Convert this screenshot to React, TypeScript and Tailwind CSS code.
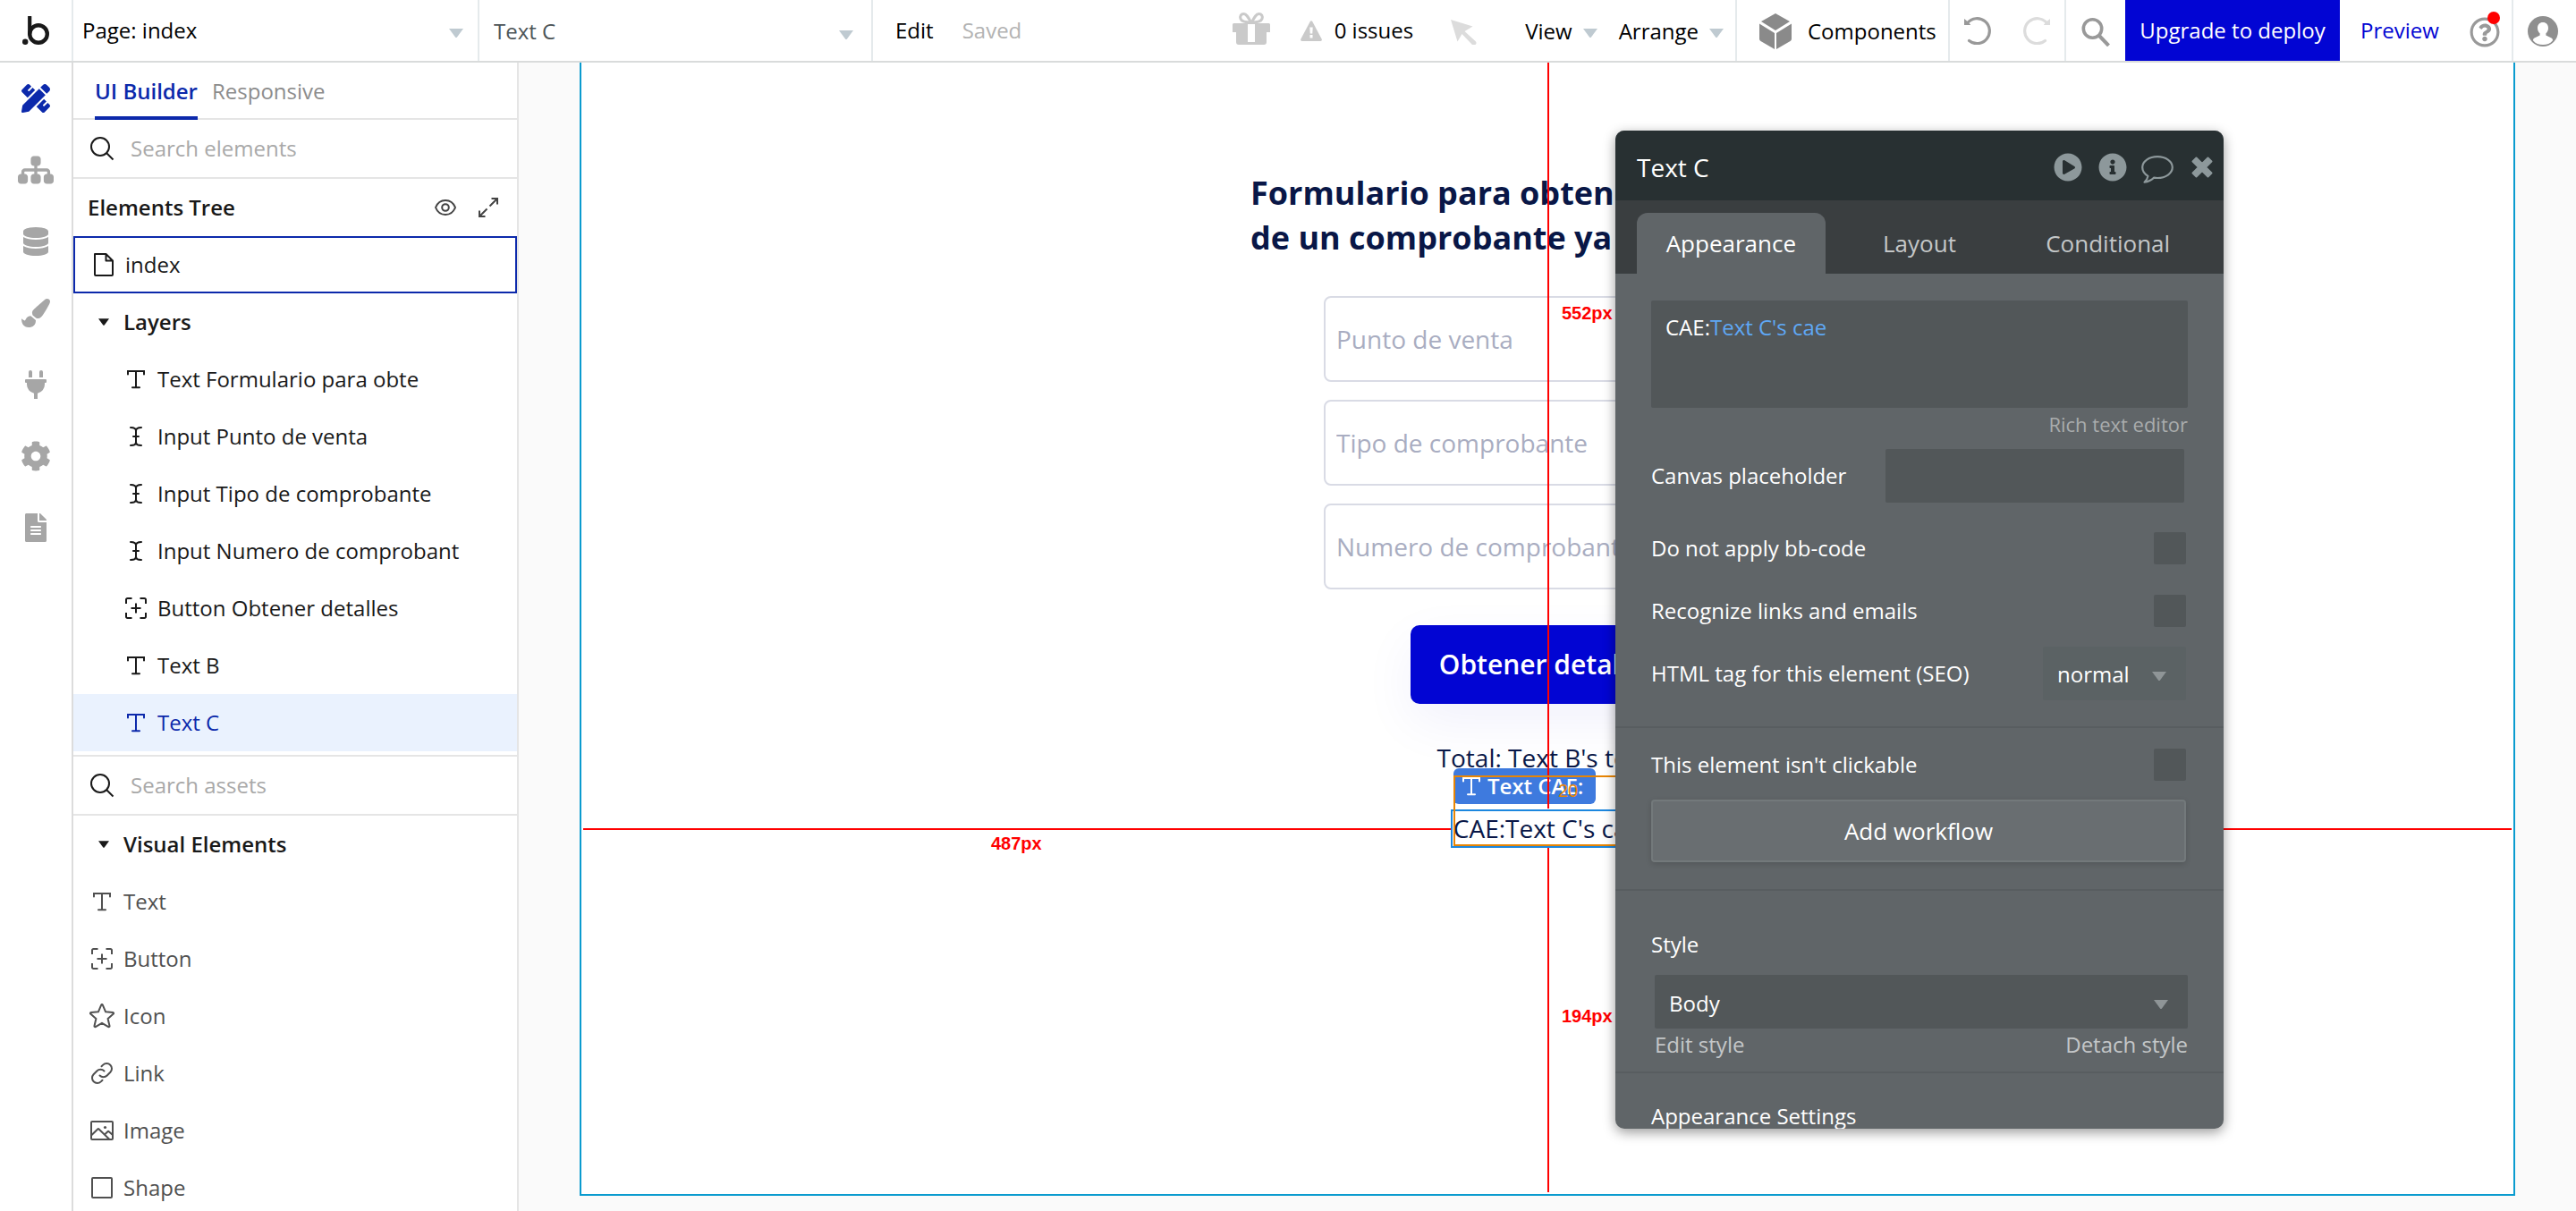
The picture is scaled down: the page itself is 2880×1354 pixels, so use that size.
import type { ReactNode } from "react";
import {
  FaCog,
  FaDatabase,
  FaFileAlt,
  FaInfoCircle,
  FaPaintBrush,
  FaPencilRuler,
  FaPlayCircle,
  FaPlug,
  FaRegQuestionCircle,
} from "react-icons/fa";
import { FaSitemap } from "react-icons/fa6";

type IconProps = { className?: string };

const Caret = ({ className = "" }: IconProps) => (
  <svg viewBox="0 0 16 10" className={className} fill="currentColor" aria-hidden="true">
    <path d="M0 0h16L9.2 9.3a1.5 1.5 0 0 1-2.4 0z" />
  </svg>
);

const BubbleLogo = () => (
  <svg viewBox="0 0 30 32" className="h-8 w-[30px]" aria-hidden="true">
    <circle cx="3.2" cy="28.7" r="3.2" fill="#191919" />
    <circle cx="18" cy="20" r="9.8" fill="none" stroke="#191919" strokeWidth="4.4" />
    <path d="M8.2 0.8v19" stroke="#191919" strokeWidth="4.2" strokeLinecap="round" />
  </svg>
);

const GiftIcon = () => (
  <svg viewBox="0 0 42 36" className="h-9 w-[42px]" aria-hidden="true">
    <g fill="none" stroke="#cacaca" strokeWidth="3">
      <path d="M20.5 11C17.5 5 15.500 1.500 12.500 1.500S8 4 9 7s4.500 4 11.500 4z" />
      <path d="M21.500 11C24.500 5 26.500 1.500 29.500 1.500S34 4 33 7s-4.500 4-11.500 4z" />
    </g>
    <path d="M1.500 12h39a1.500 1.500 0 0 1 1.500 1.500V22h-4v11a3 3 0 0 1-3 3H7a3 3 0 0 1-3-3V22H0v-8.500A1.500 1.500 0 0 1 1.500 12z" fill="#cacaca" />
    <path d="M17 13h8v20h-8z" fill="#fff" />
  </svg>
);

const WarningIcon = () => (
  <svg viewBox="0 0 24 23" className="h-[23px] w-6" aria-hidden="true">
    <path d="M10.900.8a1.300 1.300 0 0 1 2.200 0l10.600 20a1.500 1.500 0 0 1-1.300 2.200H1.600A1.500 1.500 0 0 1 .3 20.800z" fill="#cacaca" />
    <path d="M10.300 7.500h3.400l-.4 7h-2.600zM10.500 16h3v3.500h-3z" fill="#fff" />
  </svg>
);

const CursorIcon = () => (
  <svg viewBox="0 0 29 28" className="h-7 w-[29px]" aria-hidden="true">
    <path d="M0 0l24.500 7.500-9 5.500 12.300 11.200a2.700 2.700 0 0 1-3.800 3.800L12.500 16 7.500 24.500z" fill="#dcdcdc" />
  </svg>
);

const CubeIcon = () => (
  <svg viewBox="0 0 36 40" className="h-10 w-9" fill="#8a8a8a" aria-hidden="true">
    <path d="M18 0L34 9 18 19 2 9z" />
    <path d="M0 11.500l17 10.500v18L1.500 31A3 3 0 0 1 0 28.500z" />
    <path d="M36 11.500L19 22v18l15.500-9a3 3 0 0 0 1.500-2.500z" />
  </svg>
);

const UndoIcon = ({ className = "" }: IconProps) => (
  <svg viewBox="0 0 31 32" className={`h-8 w-[31px] ${className}`} aria-hidden="true">
    <path d="M3.500 7.800A14 14 0 1 1 5.500 27.500" fill="none" stroke="currentColor" strokeWidth="3.200" strokeLinecap="round" />
    <path d="M0 3l2.500 2L7 9.500V10H0z" fill="currentColor" />
  </svg>
);

const ToolbarSearchIcon = () => (
  <svg viewBox="0 0 32 32" className="size-8" fill="none" stroke="#999" aria-hidden="true">
    <circle cx="12.500" cy="12" r="10.200" strokeWidth="3.600" />
    <path d="M20 20l10.500 11" strokeWidth="4" />
  </svg>
);

const UserIcon = () => (
  <svg viewBox="0 0 34 34" className="size-[34px]" aria-hidden="true">
    <circle cx="17" cy="17" r="17" fill="#8f8f8f" />
    <path d="M17 7c-3.700 0-6 2.700-6 6.300 0 2.700 1.100 4.700 2.600 6v2.200L7.500 24.500c-1.200.7-1.500 1.700-1.500 2.700C8.500 30.500 12.500 32 17 32s8.500-1.500 11-4.800c0-1-.3-2-1.500-2.700l-6.100-3v-2.200c1.500-1.300 2.600-3.300 2.600-6C23 9.700 20.700 7 17 7z" fill="#fff" />
  </svg>
);

const CommentIcon = () => (
  <svg viewBox="0 0 36 32" className="h-8 w-9" fill="none" stroke="currentColor" strokeWidth="2.200" strokeLinejoin="round" aria-hidden="true">
    <path d="M18 2.100c9.300 0 16.800 5.300 16.800 12S27.300 26 18 26c-1.400 0-2.700-.1-4-.3-2.600 2.600-6 4.400-10.500 5 2.200-2 3.500-4 4-6.800C3.700 21.700 1.200 18.100 1.200 14.100c0-6.700 7.500-12 16.800-12z" />
  </svg>
);

const CloseIcon = () => (
  <svg viewBox="0 0 24 24" className="size-6" fill="currentColor" stroke="currentColor" strokeWidth="2" strokeLinejoin="round" aria-hidden="true">
    <path d="M5.500 1.500L12 8l6.500-6.500 4 4L16 12l6.500 6.500-4 4L12 16l-6.500 6.500-4-4L8 12 1.500 5.500z" />
  </svg>
);

const stroked = { fill: "none", stroke: "currentColor", strokeWidth: 2 } as const;

const TextIcon = () => (
  <svg viewBox="0 0 28 28" className="size-7 shrink-0" {...stroked} strokeLinecap="round" aria-hidden="true">
    <path d="M5 8.500V5h18v3.500M14 5v18M10 23.200h8" />
  </svg>
);

const InputIcon = () => (
  <svg viewBox="0 0 28 28" className="size-7 shrink-0" {...stroked} strokeLinecap="round" aria-hidden="true">
    <path d="M8 4c3.500 0 6 .8 6 3.500v13c0 2.700-2.500 3.500-6 3.500M20 4c-3.500 0-6 .8-6 3.500v13c0 2.700 2.500 3.500 6 3.500M11 14h6" />
  </svg>
);

const ButtonIcon = () => (
  <svg viewBox="0 0 28 28" className="size-7 shrink-0" {...stroked} aria-hidden="true">
    <path d="M3 9V4.500A1.500 1.500 0 0 1 4.500 3H9.500M18.500 3h5A1.500 1.500 0 0 1 25 4.500V9M25 19v4.500a1.500 1.500 0 0 1-1.500 1.500h-5M9.500 25h-5A1.500 1.500 0 0 1 3 23.500V19M14 8.500v11M8.500 14h11" />
  </svg>
);

const StarIcon = () => (
  <svg viewBox="0 0 28 28" className="size-7 shrink-0" {...stroked} strokeLinejoin="round" aria-hidden="true">
    <path d="M13.200 1.600a.9.900 0 0 1 1.600 0l3.300 7.700 8.200.7a.9.900 0 0 1 .5 1.500l-6.200 5.500 1.900 8.100a.9.900 0 0 1-1.300 1L14 21.800l-7.200 4.300a.9.900 0 0 1-1.300-1l1.900-8.100-6.200-5.500a.9.900 0 0 1 .5-1.500l8.200-.7z" />
  </svg>
);

const LinkIcon = () => (
  <svg viewBox="0 0 28 28" className="size-7 shrink-0" {...stroked} strokeLinecap="round" aria-hidden="true">
    <path d="M11.500 16.500a5.800 5.800 0 0 0 8.200 0l3.700-3.700a5.800 5.800 0 0 0-8.200-8.200l-1.700 1.700" />
    <path d="M16.500 11.500a5.800 5.800 0 0 0-8.200 0l-3.700 3.700a5.800 5.800 0 0 0 8.200 8.200l1.700-1.700" />
  </svg>
);

const ImageIcon = () => (
  <svg viewBox="0 0 28 28" className="size-7 shrink-0" {...stroked} aria-hidden="true">
    <rect x="2" y="4" width="24" height="20" rx="1" />
    <path d="M2 19.500l7.200-7a1 1 0 0 1 1.400 0L22.500 24M17 18.500l3.400-3.300a1 1 0 0 1 1.400 0L26 19" />
    <circle cx="17.500" cy="10.500" r="1.600" fill="currentColor" stroke="none" />
  </svg>
);

const ShapeIcon = () => (
  <svg viewBox="0 0 28 28" className="size-7 shrink-0" {...stroked} aria-hidden="true">
    <rect x="3" y="3" width="22" height="22" rx="1" />
  </svg>
);

const FileIcon = () => (
  <svg viewBox="0 0 28 28" className="size-7 shrink-0" {...stroked} strokeLinejoin="round" aria-hidden="true">
    <path d="M4 2h12.500L24 9.500V25a1 1 0 0 1-1 1H5a1 1 0 0 1-1-1zM16.500 2v7.500H24" />
  </svg>
);

const SearchIcon = () => (
  <svg viewBox="0 0 28 28" className="size-7 shrink-0 text-[#191919]" {...stroked} aria-hidden="true">
    <circle cx="12" cy="12" r="10" />
    <path d="M19 19l7.500 7.500" />
  </svg>
);

const EyeIcon = () => (
  <svg viewBox="0 0 24 24" className="size-6" {...stroked} aria-hidden="true">
    <path d="M1 12c2-5 6-8 11-8s9 3 11 8c-2 5-6 8-11 8s-9-3-11-8z" />
    <circle cx="12" cy="12" r="3.800" />
  </svg>
);

const ExpandIcon = () => (
  <svg viewBox="0 0 24 24" className="size-6" {...stroked} aria-hidden="true">
    <path d="M15.500 2H22v6.500M22 2l-8.500 8.500M8.500 22H2v-6.500M2 22l8.500-8.500" />
  </svg>
);

const railItems = [
  { label: "Design", icon: <FaPencilRuler className="size-8" />, color: "text-[#0c29ab]" },
  { label: "Workflow", icon: <FaSitemap className="size-10" />, color: "text-[#a6a6a6]" },
  { label: "Data", icon: <FaDatabase className="size-8" />, color: "text-[#a6a6a6]" },
  { label: "Styles", icon: <FaPaintBrush className="size-8" />, color: "text-[#a6a6a6]" },
  { label: "Plugins", icon: <FaPlug className="size-8" />, color: "text-[#a6a6a6]" },
  { label: "Settings", icon: <FaCog className="size-[34px]" />, color: "text-[#a6a6a6]" },
  { label: "Logs", icon: <FaFileAlt className="size-8" />, color: "text-[#a6a6a6]" },
];

const layers = [
  { icon: <TextIcon />, label: "Text Formulario para obte" },
  { icon: <InputIcon />, label: "Input Punto de venta" },
  { icon: <InputIcon />, label: "Input Tipo de comprobante" },
  { icon: <InputIcon />, label: "Input Numero de comprobant" },
  { icon: <ButtonIcon />, label: "Button Obtener detalles" },
  { icon: <TextIcon />, label: "Text B" },
  { icon: <TextIcon />, label: "Text C", selected: true },
];

const assets = [
  { icon: <TextIcon />, label: "Text" },
  { icon: <ButtonIcon />, label: "Button" },
  { icon: <StarIcon />, label: "Icon" },
  { icon: <LinkIcon />, label: "Link" },
  { icon: <ImageIcon />, label: "Image" },
  { icon: <ShapeIcon />, label: "Shape" },
];

type HeaderSelectProps = { label: string; value: string; className: string; caretClassName: string };

function HeaderSelect({ label, value, className, caretClassName }: HeaderSelectProps) {
  return (
    <div className={`relative border-r-2 border-[#e5eaec] ${className}`}>
      <select aria-label={label} className="h-full w-full appearance-none bg-transparent pr-10 outline-none">
        <option>{value}</option>
      </select>
      <Caret className={`pointer-events-none absolute h-2.5 w-4 text-[#bfcad1] ${caretClassName}`} />
    </div>
  );
}

function TopBar() {
  return (
    <header className="flex h-[70px] shrink-0 border-b-2 border-[#d9dbdb] bg-white text-black">
      <a href="#home" aria-label="Bubble home" className="flex w-[82px] items-center justify-center border-r-2 border-[#e5eaec]">
        <BubbleLogo />
      </a>
      <HeaderSelect label="Page" value="Page: index" className="w-[454px] pl-2.5" caretClassName="top-8 right-4" />
      <HeaderSelect label="Element" value="Text C" className="w-[440px] pt-0.5 pl-4 text-[#4d5558]" caretClassName="top-[34px] right-5" />
      <button className="pl-[25px]">Edit</button>
      <span className="flex items-center pl-8 text-[#b3b3b3]">Saved</span>

      <div className="ml-auto flex items-center border-r-2 border-[#e5eaec] pr-[13px]">
        <button aria-label="Gifts" className="pb-1"><GiftIcon /></button>
        <button className="ml-[34px] flex items-center gap-3.5"><WarningIcon />0 issues</button>
        <button aria-label="Inspect" className="ml-[42px] pt-1"><CursorIcon /></button>
        <button className="ml-[54px] flex items-center gap-3 pt-0.5">View<Caret className="mt-1 h-2.5 w-4 text-[#bfcad1]" /></button>
        <button className="ml-6 flex items-center gap-3 pt-0.5">Arrange<Caret className="mt-1 h-2.5 w-4 text-[#bfcad1]" /></button>
      </div>
      <button className="flex w-[238px] items-center gap-[18px] border-r-2 border-[#e5eaec] pt-0.5 pl-[25px]">
        <CubeIcon />Components
      </button>
      <div className="flex w-[130px] items-center justify-between border-r-2 border-[#e5eaec] px-4">
        <button aria-label="Undo" className="text-[#999]"><UndoIcon /></button>
        <button aria-label="Redo" className="text-[#dcdcdc]"><UndoIcon className="-scale-x-100" /></button>
      </div>
      <button aria-label="Search" className="flex w-[66px] items-center justify-center pt-1"><ToolbarSearchIcon /></button>
      <button className="w-60 bg-[#0205d3] text-white">Upgrade to deploy</button>
      <div className="flex w-[194px] items-center justify-between border-r-2 border-[#e5eaec] pr-[13px] pl-[23px]">
        <a href="#preview" className="text-[#0205d3]">Preview</a>
        <button aria-label="Help" className="relative pt-1 text-[#999]">
          <FaRegQuestionCircle className="size-[34px]" />
          <span className="absolute -top-0.5 right-0 size-3.5 rounded-full bg-[#ff0000]" />
        </button>
      </div>
      <button aria-label="Account" className="flex w-[70px] items-center justify-center pr-1 pt-0.5"><UserIcon /></button>
    </header>
  );
}

function Rail() {
  return (
    <nav className="flex w-[82px] shrink-0 flex-col items-center gap-12 border-r-2 border-[#dcdcdc] bg-white pt-6">
      {railItems.map((item) => (
        <button key={item.label} aria-label={item.label} className={`flex h-8 items-center justify-center ${item.color}`}>
          {item.icon}
        </button>
      ))}
    </nav>
  );
}

function SearchRow({ label }: { label: string }) {
  return (
    <label className="flex h-[66px] shrink-0 items-center gap-[18px] border-b-2 border-[#e5e5e5] pl-[18px]">
      <SearchIcon />
      <input aria-label={label} placeholder={label} className="min-w-0 flex-1 outline-none placeholder:text-[#a9a9a9]" />
    </label>
  );
}

function GroupTitle({ children }: { children: ReactNode }) {
  return (
    <button className="flex h-16 shrink-0 items-center gap-4 pl-7 font-semibold text-[#191919]">
      <Caret className="h-2 w-3" />
      {children}
    </button>
  );
}

function Sidebar() {
  return (
    <aside className="flex w-[498px] shrink-0 flex-col overflow-hidden border-r-2 border-[#e5e5e5] bg-white text-[#191919]">
      <div role="tablist" className="flex h-16 shrink-0 gap-4 border-b-2 border-[#e5e5e5] pl-6">
        <button role="tab" aria-selected="true" className="-mb-0.5 border-b-4 border-[#0c29ab] pt-1 font-semibold text-[#0c29ab]">
          UI Builder
        </button>
        <button role="tab" aria-selected="false" className="pt-0.5 text-[#8c8c8c]">Responsive</button>
      </div>
      <SearchRow label="Search elements" />
      <div className="flex h-16 shrink-0 items-center gap-6 pr-5 pl-4">
        <h2 className="flex-1 font-semibold">Elements Tree</h2>
        <button aria-label="Toggle visibility" className="text-[#444]"><EyeIcon /></button>
        <button aria-label="Expand tree" className="text-[#444]"><ExpandIcon /></button>
      </div>
      <button className="flex h-16 shrink-0 items-center gap-2.5 border-2 border-[#0c29ab] pl-[18px]">
        <FileIcon />index
      </button>
      <GroupTitle>Layers</GroupTitle>
      {layers.map((row) => (
        <button
          key={row.label}
          className={`flex h-16 shrink-0 items-center gap-2.5 pl-14 ${row.selected ? "bg-[#eaf2fe] text-[#0c29ab]" : ""}`}
        >
          {row.icon}
          {row.label}
        </button>
      ))}
      <div className="mt-1 shrink-0 border-t-2 border-[#e5e5e5]" />
      <SearchRow label="Search assets" />
      <GroupTitle>Visual Elements</GroupTitle>
      {assets.map((row) => (
        <button key={row.label} className="flex h-16 shrink-0 items-center gap-2.5 pl-[18px] text-[#505050]">
          {row.icon}
          {row.label}
        </button>
      ))}
    </aside>
  );
}

function Guides() {
  const label = "absolute font-['Liberation_Sans',sans-serif] text-[20px] leading-6 font-bold text-[#ff0000]";
  return (
    <div className="pointer-events-none absolute inset-0">
      <div className="absolute top-0 left-1/2 h-[834px] w-0.5 bg-[#ff0000]" />
      <div className="absolute top-[878px] bottom-0.5 left-1/2 w-0.5 bg-[#ff0000]" />
      <div className="absolute top-[856px] left-0.5 h-0.5 w-[calc(50%-110px)] bg-[#ff0000]" />
      <div className="absolute top-[856px] right-0.5 h-0.5 w-[calc(50%-110px)] bg-[#ff0000]" />
      <span className={`${label} top-[268px] left-1/2 ml-4`}>552px</span>
      <span className={`${label} top-[1054px] left-1/2 ml-4`}>194px</span>
      <span className={`${label} top-[861px] left-[21.2%]`}>487px</span>
    </div>
  );
}

function PageCanvas() {
  return (
    <div className="relative flex flex-1 flex-col items-center border-x-2 border-b-2 border-[#0a9bcf] bg-white pt-[121px] text-[28px] text-[#091747]">
      <h1 className="w-[664px] text-[36px] leading-[50px] font-bold">
        Formulario para obtener los detalles
        <br />
        de un comprobante ya emitido
      </h1>
      <div className="mt-10 flex w-[500px] flex-col gap-5">
        {["Punto de venta", "Tipo de comprobante", "Numero de comprobante"].map((name) => (
          <input
            key={name}
            aria-label={name}
            placeholder={name}
            className="h-24 rounded-lg border-2 border-[#d9dbe5] px-3 outline-none placeholder:text-[#a9adc1]"
          />
        ))}
      </div>
      <button className="mt-10 h-[88px] w-[306px] rounded-[10px] bg-[#0205d3] text-[30px] font-semibold text-white shadow-[0_20px_60px_rgba(2,5,211,0.06)]">
        Obtener detalles
      </button>
      <p className="mt-10 leading-10">Total: Text B&apos;s total</p>
      <p className="relative mt-[39px] leading-10">
        CAE:Text C&apos;s cae
        <span className="absolute -top-px -right-[3px] -bottom-0.5 -left-[3px] border-2 border-[#1c87df]" />
      </p>
      <div className="pointer-events-none absolute top-[789px] left-1/2 -ml-[105px] flex h-10 w-[159px] items-center gap-1 rounded-md bg-[#3e7ade] pl-1.5 text-[24px] font-semibold text-white">
        <TextIcon />
        Text CAE:
      </div>
      <Guides />
      <div className="pointer-events-none absolute top-[797px] left-1/2 -ml-[105px] h-[79px] w-[212px] border-2 border-[#e88504]" />
      <span className="absolute top-[802px] left-1/2 ml-3 font-['Liberation_Sans',sans-serif] text-[20px] leading-6 text-[#e88504]">20</span>
    </div>
  );
}

function CheckRow({ label }: { label: string }) {
  return (
    <label className="flex h-[70px] items-center justify-between pr-0.5">
      {label}
      <input type="checkbox" className="size-9 appearance-none rounded-xs bg-[#525759]" />
    </label>
  );
}

function Inspector() {
  return (
    <section className="absolute top-[76px] right-[394px] bottom-[92px] flex w-[680px] flex-col overflow-hidden rounded-[10px] bg-[#606568] text-white shadow-[0_4px_14px_rgba(0,0,0,0.4)]">
      <div className="flex h-[78px] shrink-0 items-center bg-[#283032] pt-1 pr-3 pl-6 text-[#8d989b]">
        <h2 className="flex-1 text-[28px] text-white">Text C</h2>
        <button aria-label="Run"><FaPlayCircle className="size-8" /></button>
        <button aria-label="Info" className="ml-[18px]"><FaInfoCircle className="size-8" /></button>
        <button aria-label="Comment" className="ml-4 pt-1"><CommentIcon /></button>
        <button aria-label="Close" className="ml-5"><CloseIcon /></button>
      </div>
      <div role="tablist" className="flex h-[82px] shrink-0 bg-[#3a3e40] px-6 pt-3.5 text-[26px] text-[#c4c7c8]">
        <button role="tab" aria-selected="true" className="flex-1 rounded-t-xl bg-[#606568] text-white">Appearance</button>
        <button role="tab" aria-selected="false" className="flex-1">Layout</button>
        <button role="tab" aria-selected="false" className="flex-1">Conditional</button>
      </div>

      <div className="shrink-0 border-b-2 border-[#585d60] px-10 pt-[30px] pb-6">
        <div role="textbox" aria-label="Text content" contentEditable suppressContentEditableWarning className="h-[120px] rounded-xs bg-[#525759] px-4 pt-3 leading-9 outline-none">
          CAE:<span className="text-[#5fa8f5]">Text C&apos;s cae</span>
        </div>
        <div className="flex h-9 items-center justify-end text-[#a9acad]">
          <a href="#editor" className="text-[22px]">Rich text editor</a>
        </div>
        <label className="mt-2.5 flex items-center justify-between pr-1">
          Canvas placeholder
          <input className="h-[60px] w-[334px] rounded-xs bg-[#525759] px-4 outline-none" />
        </label>
        <div className="mt-4">
          <CheckRow label="Do not apply bb-code" />
          <CheckRow label="Recognize links and emails" />
        </div>
        <label className="flex h-[70px] items-center justify-between pr-0.5">
          HTML tag for this element (SEO)
          <span className="relative">
            <select className="h-[60px] w-40 appearance-none rounded-xs bg-[#5b6264] pt-0.5 pl-4 outline-none">
              <option>normal</option>
            </select>
            <Caret className="pointer-events-none absolute top-7 right-[22px] h-2.5 w-4 text-[#8f9597]" />
          </span>
        </label>
      </div>

      <div className="shrink-0 border-b-2 border-[#585d60] px-10 pt-1.5 pb-[30px]">
        <CheckRow label="This element isn't clickable" />
        <div className="mt-1 flex pr-0.5">
          <button className="h-[70px] flex-1 rounded-sm border-2 border-[#73797b] bg-[#696e71] text-[26px] shadow-[0_2px_6px_rgba(0,0,0,0.15)]">
            Add workflow
          </button>
        </div>
      </div>

      <div className="shrink-0 border-b-2 border-[#585d60] px-10 pt-11 pb-3">
        <label htmlFor="style" className="block leading-8">Style</label>
        <div className="relative mt-[18px] ml-1">
          <select id="style" className="h-[60px] w-full appearance-none rounded-xs bg-[#525759] pt-1 pl-4 outline-none">
            <option>Body</option>
          </select>
          <Caret className="pointer-events-none absolute top-7 right-[22px] h-2.5 w-4 text-[#8f9597]" />
        </div>
        <div className="ml-1 flex h-9 items-center justify-between text-[#c4c7c8]">
          <a href="#edit-style">Edit style</a>
          <a href="#detach-style">Detach style</a>
        </div>
      </div>

      <h3 className="shrink-0 px-10 pt-8 leading-8">Appearance Settings</h3>
    </section>
  );
}

export default function App() {
  return (
    <div className="flex h-screen flex-col overflow-hidden bg-[#fafafa] font-['Open_Sans',sans-serif] text-[24px] leading-8">
      <TopBar />
      <div className="flex min-h-0 flex-1">
        <Rail />
        <Sidebar />
        <main className="relative flex min-w-0 flex-1 px-[68px] pb-[17px]">
          <PageCanvas />
          <Inspector />
        </main>
      </div>
    </div>
  );
}
